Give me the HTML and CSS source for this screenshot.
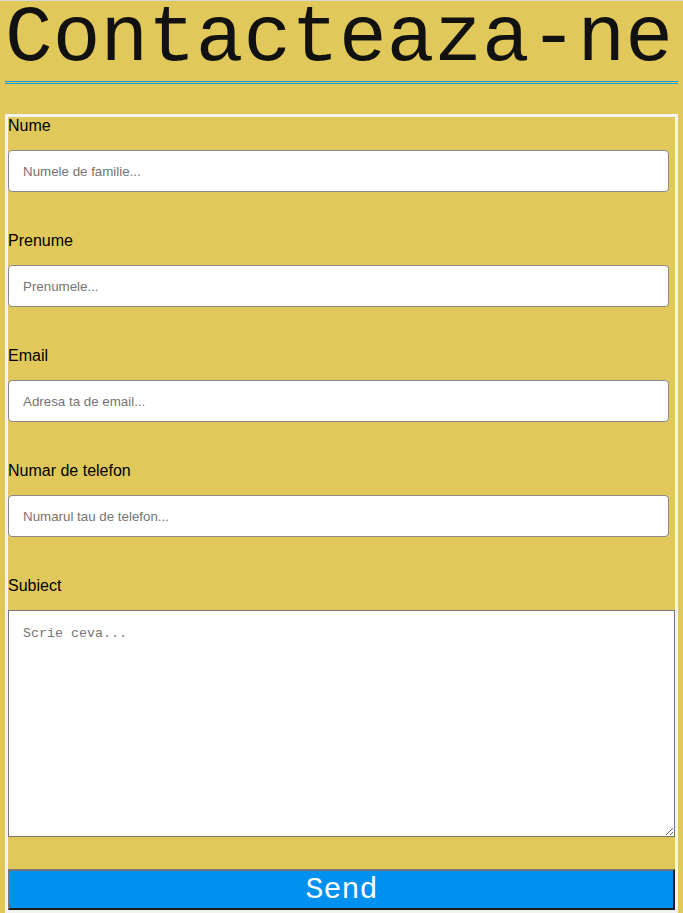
FILE: index.html
```html
<!DOCTYPE html>
<html lang="ro">
<head>
<meta charset="utf-8">
<title>Contacteaza-ne</title>
<link rel="stylesheet" href="styles.css">
</head>
<body>
<div class="page">
  <h1 class="title">Contacteaza-ne</h1>
  <div class="rule"><div class="rule-line"></div><div class="rule-line"></div></div>
  <form class="contact">
    <label class="lbl" for="nume">Nume</label>
    <input class="field" id="nume" type="text" placeholder="Numele de familie...">
    <label class="lbl" for="prenume">Prenume</label>
    <input class="field" id="prenume" type="text" placeholder="Prenumele...">
    <label class="lbl" for="email">Email</label>
    <input class="field" id="email" type="text" placeholder="Adresa ta de email...">
    <label class="lbl" for="tel">Numar de telefon</label>
    <input class="field" id="tel" type="text" placeholder="Numarul tau de telefon...">
    <label class="lbl" for="subiect">Subiect</label>
    <textarea class="area" id="subiect" placeholder="Scrie ceva..."></textarea>
    <button class="send" type="button">Send</button>
  </form>
</div>
</body>
</html>
```
FILE: styles.css
```css
html, body {
  margin: 0;
  padding: 0;
  background: #e0c95a;
  height: 100%;
  overflow: hidden;
}
body {
  border-top: 1px solid #d6d6d6;
  box-sizing: border-box;
}
.page {
  padding: 0 5px;
}
.title {
  margin: 0 -5px 0 0;
  font-family: "Liberation Mono", "Courier New", monospace;
  font-weight: normal;
  font-size: 79.5px;
  line-height: 72px;
  color: #111;
  white-space: nowrap;
  padding-top: 2px;
}
.rule {
  margin-top: 6px;
  display: flex;
  flex-direction: column;
  gap: 1px;
  position: relative;
  z-index: 1;
}
.rule-line {
  height: 1px;
  background: #0e9be0;
}
.contact {
  margin-top: 30px;
  border: 3px solid #f3f3f0;
  display: flex;
  flex-direction: column;
  align-items: flex-start;
  font-family: "Liberation Sans", Arial, sans-serif;
}
.lbl {
  font-size: 16px;
  line-height: 18px;
  color: #000;
  margin-top: 40px;
}
.lbl:first-child {
  margin-top: 0;
}
.field {
  box-sizing: border-box;
  margin-top: 15px;
  width: 661px;
  height: 42px;
  padding: 0 14px;
  border: 1px solid #8a8a8a;
  border-radius: 4px;
  background: #fff;
  font-family: "Liberation Sans", Arial, sans-serif;
  font-size: 13.33px;
  outline: none;
}
.field::placeholder {
  color: #757575;
}
.area {
  box-sizing: border-box;
  margin-top: 15px;
  width: 667px;
  height: 227px;
  padding: 15px 14px;
  border: 1px solid #767676;
  border-radius: 0;
  background: #fff;
  font-family: "Liberation Mono", "Courier New", monospace;
  font-size: 13.33px;
  resize: both;
  outline: none;
}
.area::placeholder {
  color: #757575;
}
.send {
  box-sizing: border-box;
  margin-top: 32px;
  width: 667px;
  height: 41px;
  padding: 0;
  background: #0090f0;
  color: #fff;
  font-family: "Liberation Mono", "Courier New", monospace;
  font-size: 30px;
  line-height: 1;
  border-style: solid;
  border-width: 2px;
  border-color: #767676 #1a1a1a #1a1a1a #767676;
}
```
